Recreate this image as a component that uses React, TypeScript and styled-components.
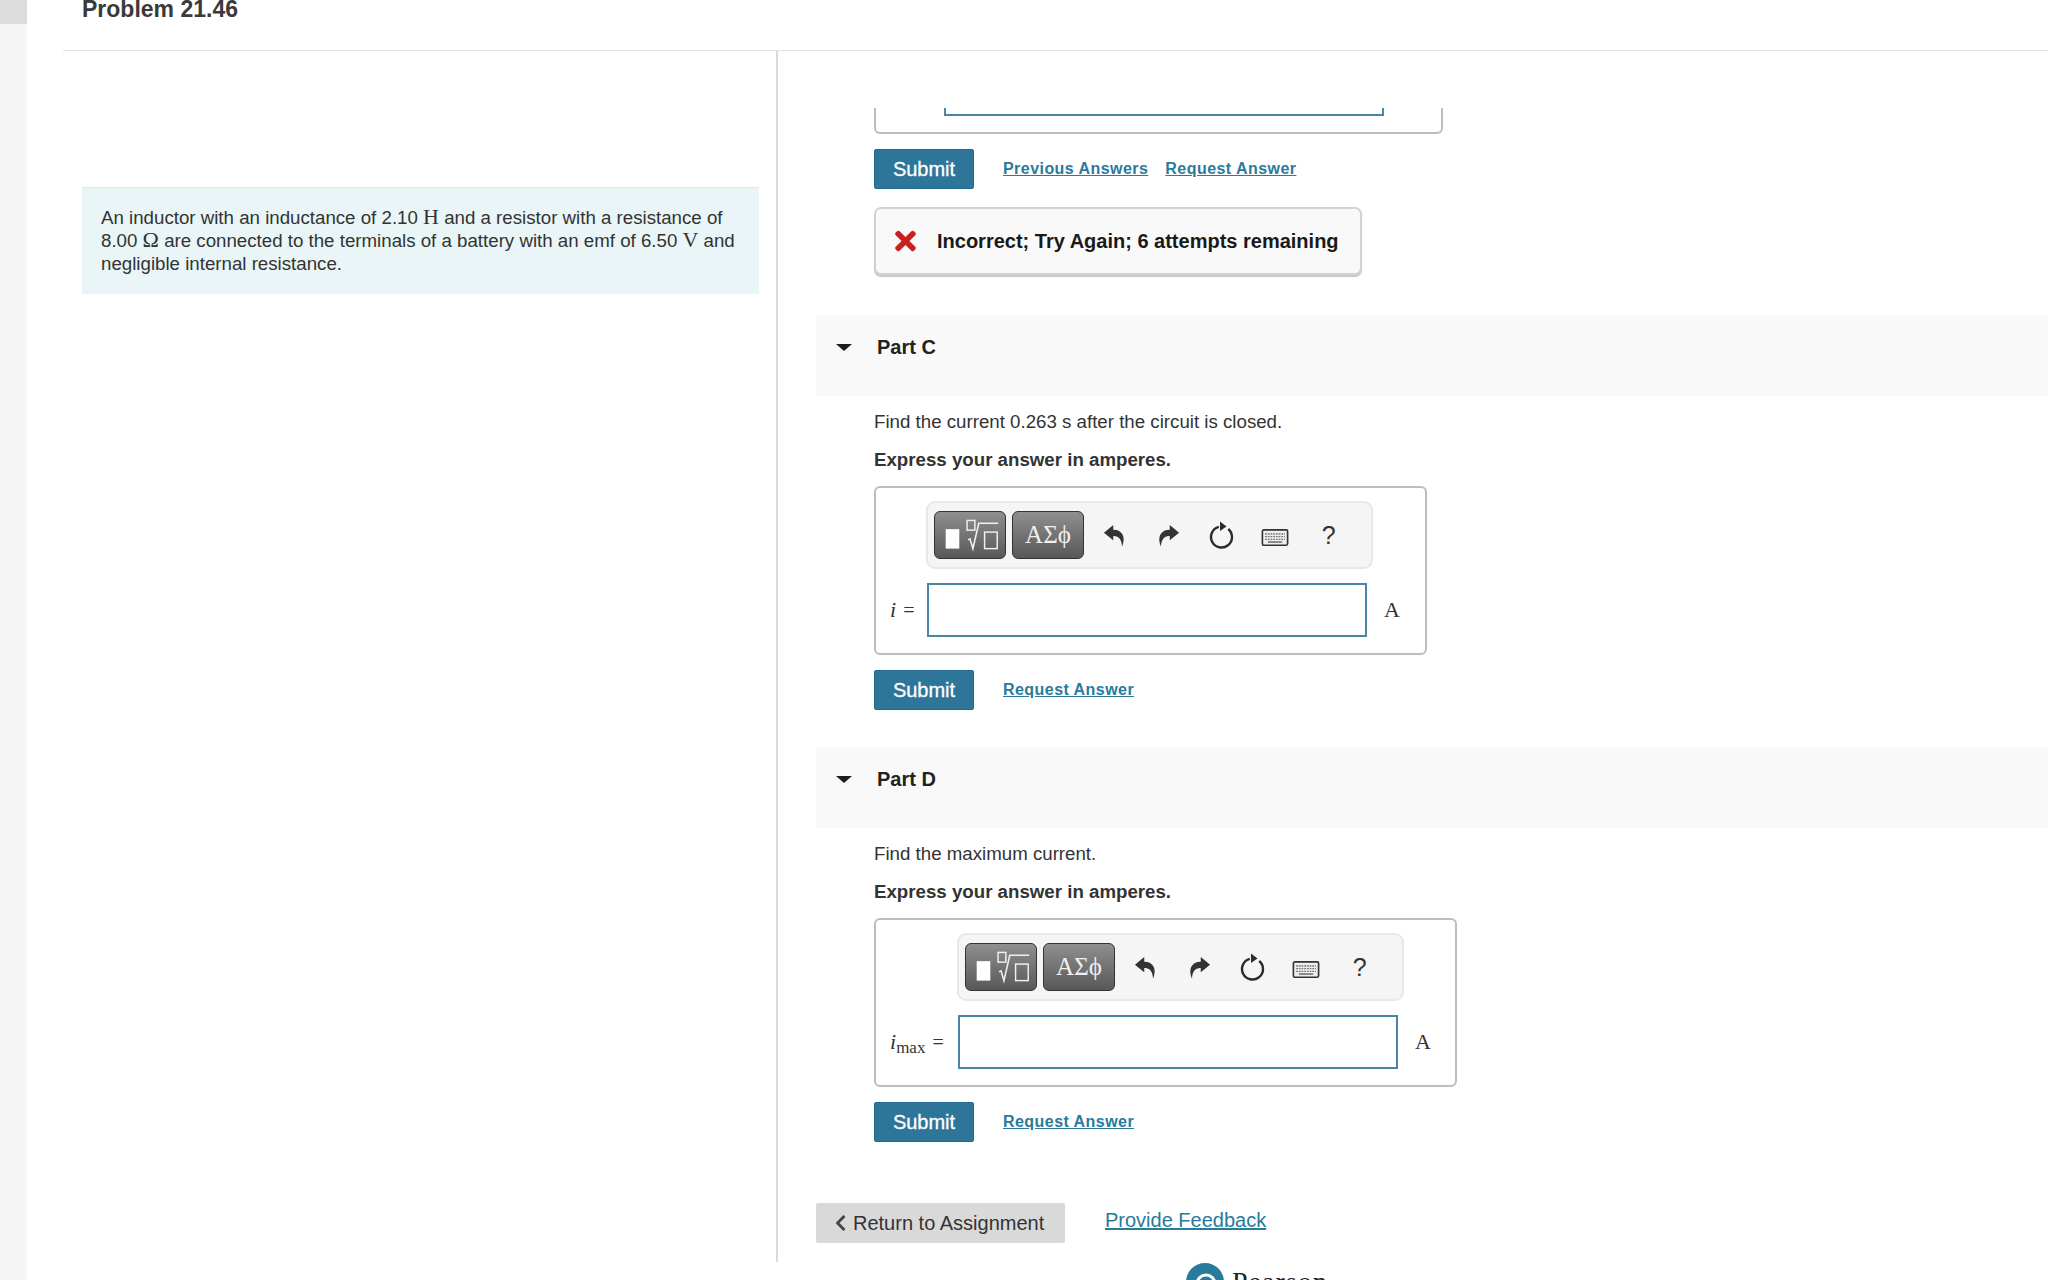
import { FC, ReactNode } from "react";
import styled, { createGlobalStyle } from "styled-components";
import { FaChevronLeft, FaTimes } from "react-icons/fa";

const GlobalStyle = createGlobalStyle`
  html, body {
    margin: 0;
    padding: 0;
    height: 1280px;
    overflow: hidden;
    background: #fff;
    font-family: "Liberation Sans", Arial, sans-serif;
    color: #333;
  }
`;

const Page = styled.div`
  display: flex;
  height: 1280px;
  overflow: hidden;
`;

const Gutter = styled.div`
  width: 27px;
  flex: none;
  background: #f5f5f5;
`;

const GutterTab = styled.div`
  height: 24px;
  background: #dcdcdc;
`;

const Main = styled.div`
  flex: 1;
  min-width: 0;
  margin-left: 36px;
`;

const Header = styled.header`
  display: flow-root;
  height: 51px;
  box-sizing: border-box;
  border-bottom: 1.5px solid #e2e2e2;
  padding-left: 19px;
`;

const Title = styled.h1`
  margin: -4px 0 0;
  font-size: 23px;
  line-height: 26px;
  font-weight: 700;
  color: #3a3a3a;
`;

const Columns = styled.div`
  display: flex;
  height: 1211px;
`;

const LeftColumn = styled.aside`
  width: 715px;
  flex: none;
  box-sizing: border-box;
  border-right: 2px solid #d3dbe4;
  padding: 136px 0 0 19px;
`;

const ProblemBox = styled.div`
  width: 677px;
  height: 107px;
  box-sizing: border-box;
  padding: 18px 14px 0 19px;
  background: #e9f5f7;
  border-top: 1.5px solid #dfe6e7;
  font-size: 18.7px;
  line-height: 23px;
  color: #333;
`;

const MathText = styled.span`
  font-family: "Liberation Serif", "Times New Roman", serif;
  font-size: 22px;
  line-height: 0;
`;

const RightColumn = styled.section`
  flex: 1;
  min-width: 0;
  padding-left: 38px;
`;

const Inset = styled.div`
  padding-left: 58px;
`;

const ClippedBox = styled.div`
  margin-top: 57px;
  width: 569px;
  height: 26px;
  box-sizing: border-box;
  border: 2px solid #bdbdbd;
  border-top: 0;
  border-radius: 0 0 6px 6px;
  padding-left: 68px;
`;

const ClippedInput = styled.div`
  width: 440px;
  height: 8px;
  box-sizing: border-box;
  border: 2px solid #4a84a6;
  border-top: 0;
`;

const SubmitRow = styled.div<{ $top: number }>`
  display: flex;
  align-items: center;
  margin-top: ${(p) => p.$top}px;
`;

const SubmitButton = styled.button`
  width: 100px;
  height: 40px;
  padding: 0;
  border: 1px solid #1f6a8d;
  border-radius: 2px;
  background: #2e7699;
  color: #fff;
  font-family: inherit;
  font-size: 20px;
  -webkit-text-stroke: 0.3px #fff;
  margin-right: 29px;
`;

const ActionLink = styled.a`
  margin-right: 17px;
  font-size: 16px;
  font-weight: 700;
  letter-spacing: 0.45px;
  color: #2a7a9c;
  text-decoration: underline;
`;

const FeedbackBox = styled.div`
  display: flex;
  align-items: center;
  width: 488px;
  height: 68px;
  margin-top: 18px;
  box-sizing: border-box;
  padding-left: 19px;
  background: #f9f9f9;
  border: 2px solid #d2d2d2;
  border-radius: 7px;
  box-shadow: 0 2px 1px #c8c8c8;
  font-size: 20px;
  font-weight: 700;
  color: #1a1a1a;

  svg {
    width: 21px;
    height: 30px;
    margin-right: 21px;
    color: #c9201f;
  }
`;

const PartHeader = styled.div<{ $top: number }>`
  display: flex;
  align-items: flex-start;
  height: 81px;
  box-sizing: border-box;
  margin-top: ${(p) => p.$top}px;
  padding: 20px 0 0 20px;
  background: #f9f9f9;
  font-size: 20px;
  font-weight: 700;
  line-height: 24px;
  color: #222;
`;

const Caret = styled.span`
  width: 0;
  height: 0;
  margin: 9px 25px 0 0;
  border-left: 8px solid transparent;
  border-right: 8px solid transparent;
  border-top: 7px solid #1c1c1c;
`;

const Question = styled.p`
  margin: 14px 0 0;
  font-size: 18.7px;
  line-height: 24px;
  color: #333;
`;

const Instruction = styled.p`
  margin: 14px 0 14px;
  font-size: 18.7px;
  line-height: 24px;
  font-weight: 700;
  color: #333;
`;

const AnswerBox = styled.div<{ $labelWidth: number; $width: number }>`
  width: ${(p) => p.$width}px;
  height: 169px;
  box-sizing: border-box;
  border: 2px solid #bdbdbd;
  border-radius: 6px;
  padding: 13px 0 0 ${(p) => 12 + p.$labelWidth}px;
  position: relative;
`;

const Toolbar = styled.div`
  display: flex;
  align-items: center;
  width: 447px;
  height: 68px;
  box-sizing: border-box;
  margin-left: -1px;
  padding-left: 6px;
  background: #f5f5f5;
  border: 2px solid #e8e8e8;
  border-radius: 9px;
`;

const ToolButton = styled.button`
  display: flex;
  align-items: center;
  justify-content: center;
  width: 72px;
  height: 48px;
  margin-right: 6px;
  padding: 0;
  background: linear-gradient(#8f8f8f, #585858);
  border: 1px solid #333;
  border-radius: 6px;
  color: #efefef;
  font-family: "Liberation Serif", serif;
  font-size: 25px;

  svg {
    width: 72px;
    height: 48px;
  }
`;

const IconSlot = styled.span<{ $drop?: number }>`
  display: flex;
  align-items: center;
  justify-content: center;
  width: 53.5px;
  margin-top: ${(p) => p.$drop ?? 0}px;
  color: #333;
  font-size: 25px;

  &:first-of-type {
    margin-left: -2px;
  }
`;

const InputRow = styled.div`
  display: flex;
  align-items: center;
  margin-top: 14px;
`;

const VarLabel = styled.label<{ $width: number }>`
  position: absolute;
  left: 14px;
  bottom: 31px;
  width: ${(p) => p.$width}px;
  font-family: "Liberation Serif", serif;
  font-size: 20px;
  line-height: 24px;
  word-spacing: 2px;
  color: #333;

  i {
    font-size: 22px;
  }

  sub {
    font-size: 17px;
    line-height: 0;
    vertical-align: -4px;
  }
`;

const AnswerInput = styled.input`
  width: 440px;
  height: 54px;
  box-sizing: border-box;
  border: 2px solid #4a84a6;
  background: #fff;
`;

const Unit = styled.span`
  margin-left: 17px;
  font-family: "Liberation Serif", serif;
  font-size: 22px;
  color: #333;
`;

const BottomRow = styled.div`
  display: flex;
  align-items: flex-start;
  margin-top: 61px;
`;

const ReturnButton = styled.button`
  display: flex;
  align-items: center;
  width: 249px;
  height: 40px;
  box-sizing: border-box;
  padding: 0 0 0 18px;
  background: #d9d9d9;
  border: 0;
  border-radius: 2px;
  font-family: inherit;
  font-size: 20px;
  color: #333;

  svg {
    width: 13px;
    height: 18px;
    margin-right: 6px;
    color: #444;
  }
`;

const FeedbackLink = styled.a`
  margin: 5px 0 0 40px;
  font-size: 20px;
  line-height: 24px;
  color: #2a7a9c;
  text-decoration: underline;
`;

const Footer = styled.footer`
  display: flex;
  align-items: flex-start;
  padding: 1px 0 0 1123px;
`;

const LogoMark = styled.svg`
  width: 38px;
  height: 38px;
  flex: none;
`;

const Wordmark = styled.span`
  margin: 3px 0 0 8px;
  font-family: "Liberation Serif", serif;
  font-size: 28px;
  line-height: 32px;
  letter-spacing: 1px;
  color: #222;
`;

const MathIcon = () => (
  <svg viewBox="0 0 72 48" fill="none">
    <rect x="11" y="18" width="14" height="20" fill="#fff" />
    <rect x="33" y="9" width="8" height="10" stroke="#f0f0f0" strokeWidth="1.5" />
    <path d="M34 29l2-1 3 10 6-26h20" stroke="#f0f0f0" strokeWidth="1.6" />
    <rect x="51" y="21" width="13" height="17" stroke="#f0f0f0" strokeWidth="1.5" />
  </svg>
);

const UndoIcon: FC<{ flip?: boolean }> = ({ flip }) => (
  <svg
    width="28"
    height="28"
    viewBox="0 0 24 24"
    fill="#333"
    transform={flip ? "scale(-1 1)" : undefined}
  >
    <path d="M10.5 3.5 L2.5 10 L10.5 16.5 V12.8 C15 12.5 17.8 15.5 18 22 C21.5 14 18.5 7.5 10.5 7.5 Z" />
  </svg>
);

const ResetIcon = () => (
  <svg width="27" height="30" viewBox="0 0 27 30" fill="none">
    <path
      d="M20.25 8.96A10.5 10.5 0 1 1 10.8 6.86"
      stroke="#2b2b2b"
      strokeWidth="2.4"
    />
    <path d="M12 1.5l6.5 5-6.5 4.5z" fill="#2b2b2b" />
  </svg>
);

const KeyboardIcon = () => (
  <svg width="28" height="18" viewBox="0 0 30 20" fill="none">
    <rect x="1" y="1" width="28" height="17" rx="1.5" fill="#eee" stroke="#333" strokeWidth="1.8" />
    <path
      d="M4 5.5h22M4 8.5h22M4 11.5h22"
      stroke="#777"
      strokeWidth="1.5"
      strokeDasharray="2 1"
    />
    <path d="M7 14.5h16" stroke="#666" strokeWidth="1.6" />
  </svg>
);

const Submit: FC<{ top: number; children: ReactNode }> = ({ top, children }) => (
  <SubmitRow $top={top}>
    <SubmitButton>Submit</SubmitButton>
    {children}
  </SubmitRow>
);

interface AnswerProps {
  width: number;
  labelWidth: number;
  label: ReactNode;
}

const Answer: FC<AnswerProps> = ({ width, labelWidth, label }) => (
  <AnswerBox $width={width} $labelWidth={labelWidth}>
    <Toolbar>
      <ToolButton>
        <MathIcon />
      </ToolButton>
      <ToolButton>ΑΣϕ</ToolButton>
      <IconSlot>
        <UndoIcon />
      </IconSlot>
      <IconSlot>
        <UndoIcon flip />
      </IconSlot>
      <IconSlot>
        <ResetIcon />
      </IconSlot>
      <IconSlot $drop={5}>
        <KeyboardIcon />
      </IconSlot>
      <IconSlot>?</IconSlot>
    </Toolbar>
    <InputRow>
      <VarLabel $width={labelWidth}>{label}</VarLabel>
      <AnswerInput />
      <Unit>A</Unit>
    </InputRow>
  </AnswerBox>
);

export default function App() {
  return (
    <>
      <GlobalStyle />
      <Page>
        <Gutter>
          <GutterTab />
        </Gutter>
        <Main>
          <Header>
            <Title>Problem 21.46</Title>
          </Header>
          <Columns>
            <LeftColumn>
              <ProblemBox>
                An inductor with an inductance of 2.10 <MathText>H</MathText> and
                a resistor with a resistance of 8.00 <MathText>Ω</MathText> are
                connected to the terminals of a battery with an emf of 6.50{" "}
                <MathText>V</MathText> and negligible internal resistance.
              </ProblemBox>
            </LeftColumn>
            <RightColumn>
              <Inset>
                <ClippedBox>
                  <ClippedInput />
                </ClippedBox>
                <Submit top={15}>
                  <ActionLink>Previous Answers</ActionLink>
                  <ActionLink>Request Answer</ActionLink>
                </Submit>
                <FeedbackBox>
                  <FaTimes />
                  Incorrect; Try Again; 6 attempts remaining
                </FeedbackBox>
              </Inset>

              <PartHeader $top={40}>
                <Caret />
                Part C
              </PartHeader>
              <Inset>
                <Question>Find the current 0.263 s after the circuit is closed.</Question>
                <Instruction>Express your answer in amperes.</Instruction>
                <Answer width={553} labelWidth={39} label={<><i>i</i> =</>} />
                <Submit top={15}>
                  <ActionLink>Request Answer</ActionLink>
                </Submit>
              </Inset>

              <PartHeader $top={37}>
                <Caret />
                Part D
              </PartHeader>
              <Inset>
                <Question>Find the maximum current.</Question>
                <Instruction>Express your answer in amperes.</Instruction>
                <Answer
                  width={583}
                  labelWidth={70}
                  label={<><i>i</i><sub>max</sub> =</>}
                />
                <Submit top={15}>
                  <ActionLink>Request Answer</ActionLink>
                </Submit>
              </Inset>

              <BottomRow>
                <ReturnButton>
                  <FaChevronLeft />
                  Return to Assignment
                </ReturnButton>
                <FeedbackLink>Provide Feedback</FeedbackLink>
              </BottomRow>
            </RightColumn>
          </Columns>
          <Footer>
            <LogoMark viewBox="0 0 38 38" fill="none">
              <circle cx="19" cy="19" r="19" fill="#2a7a9c" />
              <circle cx="20" cy="21" r="9" stroke="#fff" strokeWidth="3" />
            </LogoMark>
            <Wordmark>Pearson</Wordmark>
          </Footer>
        </Main>
      </Page>
    </>
  );
}
